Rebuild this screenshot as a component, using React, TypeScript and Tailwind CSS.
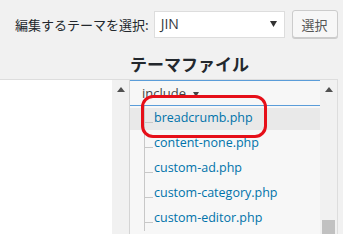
import React from "react";

const files = [
  "breadcrumb.php",
  "content-none.php",
  "custom-ad.php",
  "custom-category.php",
  "custom-editor.php",
];

function UpArrow() {
  return (
    <svg width="8" height="5" viewBox="0 0 8 5" className="block">
      <path d="M0 5 L4 0 L8 5 Z" fill="#505050" />
    </svg>
  );
}

export default function App() {
  const jp = { fontFamily: '"Noto Sans CJK JP", "Noto Sans", sans-serif' };
  const latin = { fontFamily: '"Open Sans", "Noto Sans", sans-serif' };
  return (
    <div className="relative w-[343px] h-[234px] overflow-hidden bg-[#f1f1f1]">
      {/* top row */}
      <div className="flex items-center h-[28px] mt-[10px] pl-[15px]">
        <span className="text-[13px] leading-none text-[#23282d]" style={jp}>
          編集するテーマを選択:
        </span>
        <div className="ml-[5px] w-[131px] h-[27px] bg-white border border-[#ddd] flex items-center justify-between pl-[6px] pr-[7px] box-border">
          <span className="text-[14px] leading-none text-[#32373c]" style={latin}>
            JIN
          </span>
          <svg width="7" height="6" viewBox="0 0 7 6" className="block">
            <path d="M0 0 L7 0 L3.5 6 Z" fill="#333" />
          </svg>
        </div>
        <button
          className="ml-[7px] w-[46px] h-[28px] bg-[#f7f7f7] border border-[#ccc] rounded-[3px] shadow-[0_1px_0_#ccc] text-[13px] leading-none text-[#555] box-border"
          style={jp}
        >
          選択
        </button>
      </div>

      {/* heading */}
      <div className="h-[41px] pt-[9px] box-border flex items-center pl-[130px]">
        <h2 className="text-[17px] leading-none font-bold text-[#23282d]" style={jp}>
          テーマファイル
        </h2>
      </div>

      {/* panels */}
      <div className="flex h-[155px] w-[338px] border-t border-r border-[#ddd] box-border">
        <div className="w-[112px] bg-white" />
        <div className="w-[17px] bg-[#f1f1f1] flex justify-center pt-[7px]">
          <UpArrow />
        </div>
        <div className="w-px bg-[#d4d4d4]" />
        <div className="w-[190px] bg-[#f7f7f7] flex flex-col overflow-hidden" style={latin}>
          <div className="h-[26px] shrink-0 border-t border-b border-[#5b9dd9] box-border flex items-center pl-[12px] gap-[7px]">
            <span className="text-[13px] leading-none text-[#444]">include</span>
            <svg width="6" height="5" viewBox="0 0 6 5" className="block mt-[2px]">
              <path d="M0 0 L6 0 L3 5 Z" fill="#444" />
            </svg>
          </div>
          {files.map((f, i) => (
            <div
              key={f}
              className={
                "h-[25px] flex shrink-0 " +
                (i === 0
                  ? "bg-[linear-gradient(to_bottom,transparent_2px,#e9e9e9_2px,#e9e9e9_24px,transparent_24px)]"
                  : "")
              }
            >
              <div className="ml-[14px] w-[9px] h-full border-l border-[#c8c8c8] box-border">
                <div className="h-[17px] border-b border-[#c8c8c8] box-border" />
              </div>
              <span className="ml-[1px] self-center text-[12.5px] leading-none text-[#0073aa]">
                {f}
              </span>
            </div>
          ))}
        </div>
        <div className="w-[17px] bg-[#f1f1f1] flex flex-col items-center pt-[7px]">
          <UpArrow />
          <div className="mt-auto w-[13px] h-[14px] bg-[#c1c1c1]" />
        </div>
      </div>

      {/* red highlight annotation */}
      <div className="absolute left-[141px] top-[95px] w-[126px] h-[43px] border-[3px] border-[#e60f19] rounded-[12px] box-border pointer-events-none" />
    </div>
  );
}
